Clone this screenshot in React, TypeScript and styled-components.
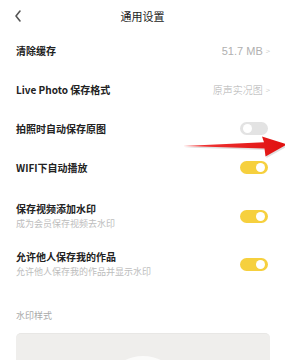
import styled, { createGlobalStyle } from "styled-components"

const GlobalStyle = createGlobalStyle`
  html, body {
    margin: 0;
    padding: 0;
    background: #ffffff;
  }
  body {
    font-family: "Noto Sans CJK SC", "Noto Sans", "Liberation Sans", sans-serif;
    color: #222;
    -webkit-font-smoothing: antialiased;
  }
`

const Page = styled.div`
  position: relative;
  width: 285px;
  height: 360px;
  overflow: hidden;
  background: #fff;
  display: flex;
  flex-direction: column;
`

const Header = styled.div`
  height: 31px;
  display: flex;
  align-items: center;
  justify-content: center;
  position: relative;
  flex-shrink: 0;
`

const BackButton = styled.div`
  position: absolute;
  left: 13px;
  top: 9px;
  width: 10px;
  height: 14px;
  display: flex;
`

const Title = styled.div`
  font-size: 11px;
  line-height: 14px;
  color: #222;
  padding-top: 1px;
`

const Section = styled.div<{ $top?: number }>`
  display: flex;
  flex-direction: column;
  padding-top: ${p => p.$top ?? 0}px;
`

const Row = styled.div<{ $tall?: boolean }>`
  height: ${p => (p.$tall ? 48 : 39)}px;
  padding: 0 15px 0 16px;
  display: flex;
  align-items: center;
  justify-content: space-between;
`

const Texts = styled.div`
  display: flex;
  flex-direction: column;
  gap: 2px;
`

const Label = styled.div`
  font-size: 10px;
  line-height: 14px;
  font-weight: 600;
  color: #222;
`

const Sub = styled.div`
  font-size: 9px;
  line-height: 12px;
  color: #bdbdbd;
`

const Value = styled.div`
  font-size: 10px;
  color: #b0b0b0;
  display: flex;
  align-items: center;
  gap: 3px;
  font-weight: 300;
`

const Number = styled.span`
  font-family: "Liberation Sans", sans-serif;
  font-size: 11px;
`

const Chevron = styled.span`
  font-size: 8px;
  color: #c4c4c4;
`

const Switch = styled.div<{ $on: boolean }>`
  width: 28px;
  height: 13px;
  border-radius: 7px;
  background: ${p => (p.$on ? "#f6d03e" : "#e3e3e3")};
  display: flex;
  align-items: center;
  justify-content: ${p => (p.$on ? "flex-end" : "flex-start")};
  padding: 0 3px;
  box-sizing: border-box;
  margin-right: 2px;
`

const Knob = styled.div`
  width: 9px;
  height: 9px;
  border-radius: 50%;
  background: #fff;
`

const Divider = styled.div`
  height: 1px;
  margin: 2px 0 0 16px;
  background: #f4f4f4;
`

const SectionLabel = styled.div`
  font-size: 9px;
  line-height: 12px;
  color: #a9a9a9;
  padding: 20px 16px 0;
`

const Card = styled.div`
  margin: 11px 15px 0 16px;
  height: 60px;
  background: #efeeec;
  border-radius: 5px;
  border-top: 1px solid #e8e7e5;
  display: flex;
  justify-content: center;
  padding-top: 22px;
  box-sizing: border-box;
`

const Bubble = styled.div`
  width: 52px;
  height: 30px;
  border-radius: 50%;
  background: #fbfbfa;
`

const ArrowLayer = styled.svg`
  position: absolute;
  left: 0;
  top: 0;
  pointer-events: none;
`

function Toggle({ on }: { on: boolean }) {
  return (
    <Switch $on={on}>
      <Knob />
    </Switch>
  )
}

export default function App() {
  return (
    <>
      <GlobalStyle />
      <Page>
        <Header>
          <BackButton>
            <svg width="10" height="14" viewBox="0 0 10 14">
              <path d="M7 2 L3 7 L7 12" fill="none" stroke="#555" strokeWidth="1.6" strokeLinecap="round" strokeLinejoin="round" />
            </svg>
          </BackButton>
          <Title>通用设置</Title>
        </Header>
        <Section>
          <Row>
            <Label>清除缓存</Label>
            <Value><Number>51.7 MB</Number><Chevron>&gt;</Chevron></Value>
          </Row>
          <Row>
            <Label>Live Photo 保存格式</Label>
            <Value>原声实况图<Chevron>&gt;</Chevron></Value>
          </Row>
          <Row>
            <Label>拍照时自动保存原图</Label>
            <Toggle on={false} />
          </Row>
          <Row>
            <Label>WIFI下自动播放</Label>
            <Toggle on />
          </Row>
        </Section>
        <Section $top={5}>
          <Row $tall>
            <Texts>
              <Label>保存视频添加水印</Label>
              <Sub>成为会员保存视频去水印</Sub>
            </Texts>
            <Toggle on />
          </Row>
          <Row $tall>
            <Texts>
              <Label>允许他人保存我的作品</Label>
              <Sub>允许他人保存我的作品并显示水印</Sub>
            </Texts>
            <Toggle on />
          </Row>
        </Section>
        <Divider />
        <SectionLabel>水印样式</SectionLabel>
        <Card>
          <Bubble />
        </Card>
        <ArrowLayer width="285" height="360" viewBox="0 0 285 360">
          <defs>
            <linearGradient id="arrowFill" x1="0" y1="0" x2="1" y2="0">
              <stop offset="0" stopColor="#f23a3a" />
              <stop offset="1" stopColor="#e0100f" />
            </linearGradient>
          </defs>
          <path
            d="M183 146 L264 142.2 L262 136.5 L287 144.5 L265.5 156.5 L264.5 148.5 Z"
            fill="#000"
            opacity="0.12"
            transform="translate(1 1.5)"
          />
          <path
            d="M183 146 L264 142.2 L262 136.5 L287 144.5 L265.5 156.5 L264.5 148.5 Z"
            fill="url(#arrowFill)"
          />
        </ArrowLayer>
      </Page>
    </>
  )
}
